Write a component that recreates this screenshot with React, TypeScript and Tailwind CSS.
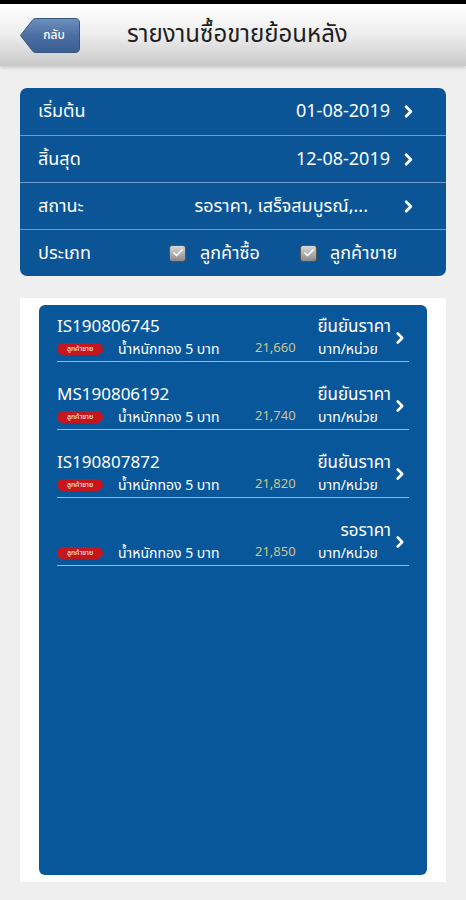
import { ChevronRight, Check } from 'lucide-react';

const font = { fontFamily: '"Noto Sans Thai", "Noto Sans", "DejaVu Sans", sans-serif' };

const filters = [
  { label: 'เริ่มต้น', value: '01-08-2019', gap: 'mr-0' },
  { label: 'สิ้นสุด', value: '12-08-2019', gap: 'mr-0' },
  { label: 'สถานะ', value: 'รอราคา, เสร็จสมบูรณ์,...', gap: 'mr-[22px]' },
];

const orders = [
  { id: 'IS190806745', status: 'ยืนยันราคา', price: '21,660' },
  { id: 'MS190806192', status: 'ยืนยันราคา', price: '21,740' },
  { id: 'IS190807872', status: 'ยืนยันราคา', price: '21,820' },
  { id: '', status: 'รอราคา', price: '21,850' },
];

function BackButton() {
  return (
    <div className="relative ml-[20px] h-[35px] w-[60px] shrink-0">
      <svg width="60" height="35" viewBox="0 0 60 35" className="absolute inset-0">
        <defs>
          <linearGradient id="bb" x1="0" y1="0" x2="0" y2="1">
            <stop offset="0" stopColor="#6f90bd" />
            <stop offset="0.5" stopColor="#4b6fa3" />
            <stop offset="1" stopColor="#3b5f93" />
          </linearGradient>
        </defs>
        <path d="M0.5 17.5 L13 1.5 Q14 0.5 16 0.5 L55 0.5 Q59.5 0.5 59.5 5 L59.5 30 Q59.5 34.5 55 34.5 L16 34.5 Q14 34.5 13 33.5 Z" fill="url(#bb)" stroke="#35577f" />
      </svg>
      <span className="absolute inset-0 flex items-center justify-center pl-[8px] text-[12px] font-medium text-white">กลับ</span>
    </div>
  );
}

function Checkbox() {
  return (
    <span className="flex h-[17px] w-[17px] items-center justify-center rounded-[3px] border border-[#555] bg-gradient-to-b from-[#d8d8d8] to-[#8a8a8a]">
      <Check size={12} strokeWidth={3.5} className="text-white" />
    </span>
  );
}

export default function App() {
  return (
    <div className="h-[900px] w-[466px] overflow-hidden bg-[#efefef]" style={font}>
      <div className="h-[4px] bg-black" />
      <header className="flex h-[62px] items-center bg-gradient-to-b from-white via-[#ededed] to-[#c9c9c9] shadow-[0_2px_3px_rgba(0,0,0,0.15)]">
        <BackButton />
        <h1 className="ml-[47px] text-[24px] text-[#1e1e1e]">รายงานซื้อขายย้อนหลัง</h1>
      </header>

      <main className="px-[20px] pt-[22px]">
        <section className="overflow-hidden rounded-[7px] bg-[#0b5597] text-white">
          {filters.map((f, i) => (
            <div
              key={f.label}
              className={`flex h-[47px] items-center pl-[18px] pr-[28px] ${i > 0 ? 'border-t border-[#6d9ccc]' : ''}`}
            >
              <span className="text-[18px]">{f.label}</span>
              <span className={`ml-auto text-[18px] ${f.gap}`}>{f.value}</span>
              <ChevronRight size={19} strokeWidth={3.5} className="ml-[9px]" />
            </div>
          ))}
          <div className="flex h-[47px] items-center border-t border-[#6d9ccc] pl-[18px]">
            <span className="w-[131px] text-[18px]">ประเภท</span>
            <Checkbox />
            <span className="ml-[14px] w-[100px] text-[18px]">ลูกค้าซื้อ</span>
            <Checkbox />
            <span className="ml-[13px] text-[18px]">ลูกค้าขาย</span>
          </div>
        </section>

        <section className="mt-[22px] h-[584px] bg-white px-[19px] py-[7px]">
          <div className="h-full rounded-[6px] bg-[#09579b] px-[18px] text-white">
            {orders.map((o) => (
              <div key={o.price} className="mb-[11px] flex items-center border-b-[1.5px] border-[#9db7d4] pb-[2px] pt-[12px]">
                <div className="flex-1">
                  <div className="flex h-[22px] items-center justify-between">
                    <span className="text-[17px]">{o.id}</span>
                    <span className="text-[17px]">{o.status}</span>
                  </div>
                  <div className="flex h-[20px] items-center">
                    <span className="flex h-[12px] w-[46px] items-center justify-center rounded-full bg-[#c5161d] text-[7px] leading-none text-white">
                      ลูกค้าขาย
                    </span>
                    <span className="ml-[15px] w-[137px] text-[14px]">น้ำหนักทอง 5 บาท</span>
                    <span className="w-[63px] text-[13px] text-[#cfc48a]">{o.price}</span>
                    <span className="text-[14px]">บาท/หน่วย</span>
                  </div>
                </div>
                <div className="flex w-[18px] justify-center">
                  <ChevronRight size={18} strokeWidth={3.5} />
                </div>
              </div>
            ))}
          </div>
        </section>
      </main>
    </div>
  );
}
